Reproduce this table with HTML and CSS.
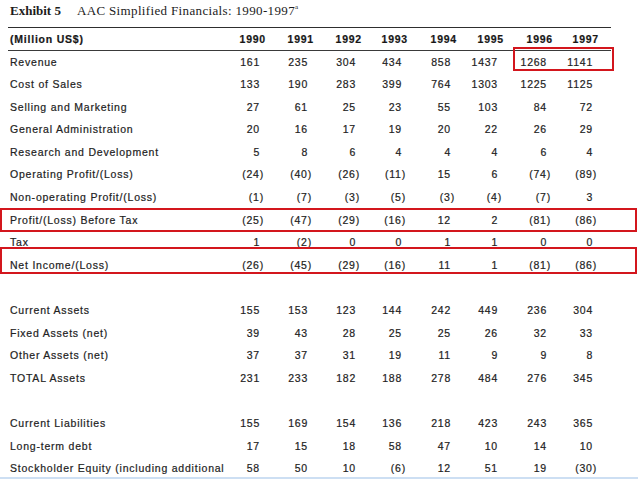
FILE: index.html
```html
<!DOCTYPE html>
<html>
<head>
<meta charset="utf-8">
<link rel="stylesheet" href="styles.css">
</head>
<body>
<div class="page">
  <h1 class="title"><span class="exhibit">Exhibit 5</span><span class="caption">AAC Simplified Financials: 1990-1997<sup>a</sup></span></h1>
  <div class="table">
    <div class="row head">
      <div class="label">(Million US$)</div>
      <div class="yr">1990</div><div class="yr">1991</div><div class="yr">1992</div><div class="yr">1993</div><div class="yr">1994</div><div class="yr">1995</div><div class="yr">1996</div><div class="yr">1997</div>
    </div>
    <div class="row box-rev">
      <div class="label">Revenue</div>
      <div class="num">161</div><div class="num">235</div><div class="num">304</div><div class="num">434</div><div class="num">858</div><div class="num">1437</div><div class="num">1268</div><div class="num">1141</div>
    </div>
    <div class="row">
      <div class="label">Cost of Sales</div>
      <div class="num">133</div><div class="num">190</div><div class="num">283</div><div class="num">399</div><div class="num">764</div><div class="num">1303</div><div class="num">1225</div><div class="num">1125</div>
    </div>
    <div class="row">
      <div class="label">Selling and Marketing</div>
      <div class="num">27</div><div class="num">61</div><div class="num">25</div><div class="num">23</div><div class="num">55</div><div class="num">103</div><div class="num">84</div><div class="num">72</div>
    </div>
    <div class="row">
      <div class="label">General Administration</div>
      <div class="num">20</div><div class="num">16</div><div class="num">17</div><div class="num">19</div><div class="num">20</div><div class="num">22</div><div class="num">26</div><div class="num">29</div>
    </div>
    <div class="row">
      <div class="label">Research and Development</div>
      <div class="num">5</div><div class="num">8</div><div class="num">6</div><div class="num">4</div><div class="num">4</div><div class="num">4</div><div class="num">6</div><div class="num">4</div>
    </div>
    <div class="row">
      <div class="label">Operating Profit/(Loss)</div>
      <div class="num neg">(24)</div><div class="num neg">(40)</div><div class="num neg">(26)</div><div class="num neg">(11)</div><div class="num">15</div><div class="num">6</div><div class="num neg">(74)</div><div class="num neg">(89)</div>
    </div>
    <div class="row">
      <div class="label">Non-operating Profit/(Loss)</div>
      <div class="num neg">(1)</div><div class="num neg">(7)</div><div class="num neg">(3)</div><div class="num neg">(5)</div><div class="num neg">(3)</div><div class="num neg">(4)</div><div class="num neg">(7)</div><div class="num">3</div>
    </div>
    <div class="row box-pbt">
      <div class="label">Profit/(Loss) Before Tax</div>
      <div class="num neg">(25)</div><div class="num neg">(47)</div><div class="num neg">(29)</div><div class="num neg">(16)</div><div class="num">12</div><div class="num">2</div><div class="num neg">(81)</div><div class="num neg">(86)</div>
    </div>
    <div class="row">
      <div class="label">Tax</div>
      <div class="num">1</div><div class="num neg">(2)</div><div class="num">0</div><div class="num">0</div><div class="num">1</div><div class="num">1</div><div class="num">0</div><div class="num">0</div>
    </div>
    <div class="row box-ni">
      <div class="label">Net Income/(Loss)</div>
      <div class="num neg">(26)</div><div class="num neg">(45)</div><div class="num neg">(29)</div><div class="num neg">(16)</div><div class="num">11</div><div class="num">1</div><div class="num neg">(81)</div><div class="num neg">(86)</div>
    </div>
    <div class="row spacer"></div>
    <div class="row">
      <div class="label">Current Assets</div>
      <div class="num">155</div><div class="num">153</div><div class="num">123</div><div class="num">144</div><div class="num">242</div><div class="num">449</div><div class="num">236</div><div class="num">304</div>
    </div>
    <div class="row">
      <div class="label">Fixed Assets (net)</div>
      <div class="num">39</div><div class="num">43</div><div class="num">28</div><div class="num">25</div><div class="num">25</div><div class="num">26</div><div class="num">32</div><div class="num">33</div>
    </div>
    <div class="row">
      <div class="label">Other Assets (net)</div>
      <div class="num">37</div><div class="num">37</div><div class="num">31</div><div class="num">19</div><div class="num">11</div><div class="num">9</div><div class="num">9</div><div class="num">8</div>
    </div>
    <div class="row">
      <div class="label">TOTAL Assets</div>
      <div class="num">231</div><div class="num">233</div><div class="num">182</div><div class="num">188</div><div class="num">278</div><div class="num">484</div><div class="num">276</div><div class="num">345</div>
    </div>
    <div class="row spacer"></div>
    <div class="row">
      <div class="label">Current Liabilities</div>
      <div class="num">155</div><div class="num">169</div><div class="num">154</div><div class="num">136</div><div class="num">218</div><div class="num">423</div><div class="num">243</div><div class="num">365</div>
    </div>
    <div class="row">
      <div class="label">Long-term debt</div>
      <div class="num">17</div><div class="num">15</div><div class="num">18</div><div class="num">58</div><div class="num">47</div><div class="num">10</div><div class="num">14</div><div class="num">10</div>
    </div>
    <div class="row">
      <div class="label">Stockholder Equity (including additional<br>capital)</div>
      <div class="num">58</div><div class="num">50</div><div class="num">10</div><div class="num neg">(6)</div><div class="num">12</div><div class="num">51</div><div class="num">19</div><div class="num neg">(30)</div>
    </div>
  </div>
</div>
<div class="viewer-edge"></div>
</body>
</html>
```

FILE: styles.css
```css
html, body {
  margin: 0;
  padding: 0;
  background: #ffffff;
  height: 479px;
  overflow: hidden;
}

.page {
  padding-left: 8px;
}

.title {
  margin: 3px 0 0 0;
  padding-left: 2px;
  height: 16px;
  line-height: 16px;
  font-family: "Liberation Serif", "Times New Roman", serif;
  font-size: 13px;
  font-weight: normal;
  color: #1c1c1c;
  white-space: nowrap;
}

.exhibit {
  font-weight: bold;
}

.caption {
  margin-left: 16px;
  letter-spacing: 0.35px;
}

.caption sup {
  font-size: 7px;
  vertical-align: 6px;
  line-height: 0;
}

.table {
  margin-top: 7.5px;
  width: 603px;
  font-family: "Liberation Sans", Arial, sans-serif;
  font-size: 10.5px;
  letter-spacing: 0.78px;
  color: #222222;
  -webkit-text-stroke: 0.2px #222222;
}

.row {
  display: grid;
  grid-template-columns: 209px 47px 48px 48px 46px 49px 47px 49px 46px;
  height: 22.6px;
  line-height: 22.6px;
}

.label {
  padding-left: 2px;
  white-space: nowrap;
}

.num {
  text-align: right;
  padding-right: 4px;
}

.num.neg {
  padding-right: 0;
}

.head {
  height: 22px;
  line-height: 22px;
  border-top: 1.5px solid #2e2e2e;
  border-bottom: 1.5px solid #3a3a3a;
  font-weight: bold;
  color: #161616;
}

.yr {
  text-align: right;
  margin-right: -2px;
}

.box-rev,
.box-pbt,
.box-ni {
  position: relative;
}

.box-rev::after,
.box-pbt::after,
.box-ni::after {
  content: "";
  position: absolute;
  border: 2px solid #d3161d;
  box-sizing: border-box;
}

.box-rev::after {
  left: 505px;
  width: 101px;
  top: -3.5px;
  height: 23.5px;
}

.box-pbt::after {
  left: -8px;
  right: -26px;
  top: -0.5px;
  height: 24px;
}

.box-ni::after {
  left: -8px;
  right: -26px;
  top: -6.6px;
  height: 26.8px;
}

.viewer-edge {
  position: fixed;
  left: 0;
  right: 0;
  bottom: 0;
  height: 2px;
  background: #cddff3;
}
```
